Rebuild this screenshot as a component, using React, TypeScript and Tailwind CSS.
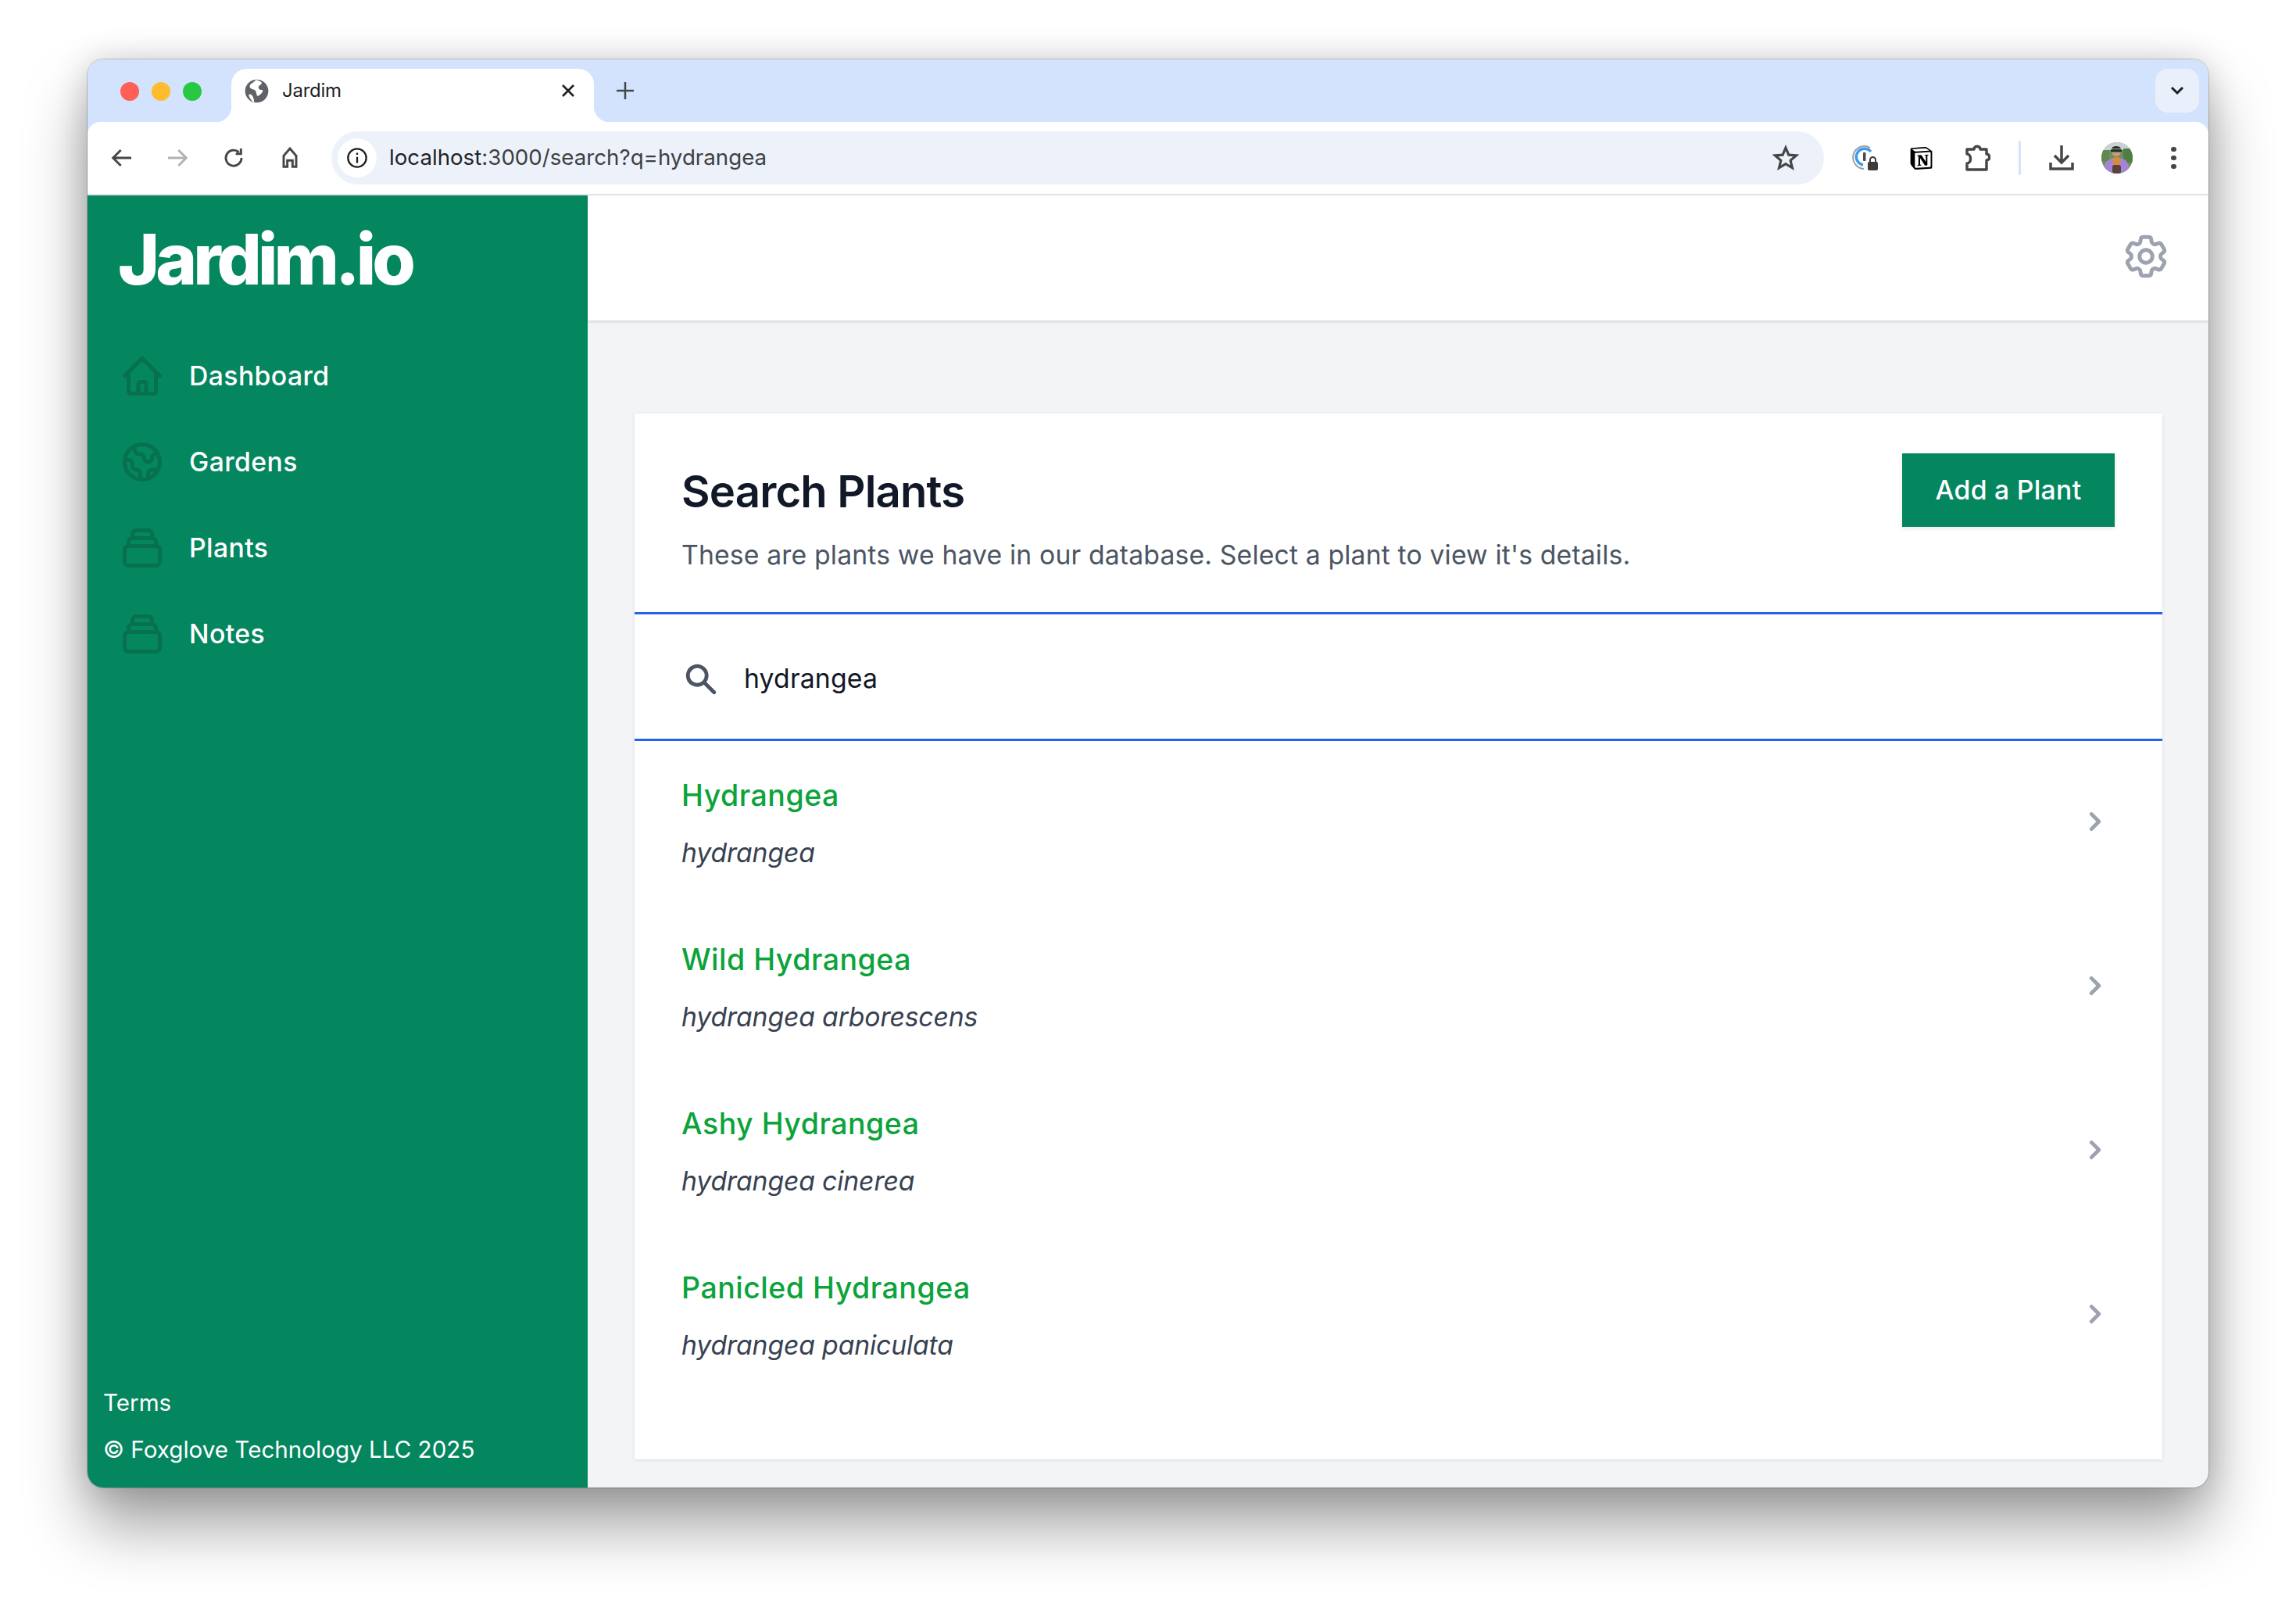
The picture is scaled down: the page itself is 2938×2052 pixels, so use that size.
import React from "react";
import { HiOutlineHome, HiOutlineGlobe, HiOutlineCollection, HiChevronRight, HiSearch } from "react-icons/hi";
import { HiOutlineCog6Tooth } from "react-icons/hi2";
import { SiNotion } from "react-icons/si";

const nav = [
  { label: "Dashboard", Icon: HiOutlineHome },
  { label: "Gardens", Icon: HiOutlineGlobe },
  { label: "Plants", Icon: HiOutlineCollection },
  { label: "Notes", Icon: HiOutlineCollection },
];

const plants = [
  ["Hydrangea", "hydrangea"],
  ["Wild Hydrangea", "hydrangea arborescens"],
  ["Ashy Hydrangea", "hydrangea cinerea"],
  ["Panicled Hydrangea", "hydrangea paniculata"],
];

function Favicon() {
  return (
    <svg width="31" height="31" viewBox="0 0 24 24">
      <circle cx="12" cy="12" r="11.500" fill="#5f6368" />
      <path d="M11 1 C9 4 6 4 5 7 C5 10 8 10 10 11 C12 12 11 15 13 17 C15 16 18 14 18 11 C15 11 13 10 14 7 C16 6 17 5 17 3.500 C15 2 13 1 11 1 Z" fill="#fff" />
      <path d="M5 15 C7 15 9 17 9.500 23 C7 22 5 19 4 16 Z" fill="#fff" />
    </svg>
  );
}

function ToolIcon({ children, w = 32 }: { children: React.ReactNode; w?: number }) {
  return (
    <svg width={w} height={w} viewBox="0 0 24 24" fill="none" stroke="currentColor" strokeWidth="2.200">
      {children}
    </svg>
  );
}

function OnePassword() {
  return (
    <svg width="34" height="34" viewBox="0 0 34 34" fill="none">
      <path d="M23 4 A14.500 14.500 0 1 0 15 31" stroke="#9aa0a6" strokeWidth="2" />
      <path d="M24 9 A10.500 10.500 0 1 0 14 26" stroke="#3b9cf0" strokeWidth="3.500" />
      <rect x="14" y="10" width="3.500" height="11" rx="1" fill="#4a4a4a" />
      <rect x="20" y="22" width="13" height="11" rx="2" fill="#3c3c3c" />
      <path d="M23 22 v-2.500 a3.500 3.500 0 0 1 7 0 v2.500" stroke="#3c3c3c" strokeWidth="2" />
    </svg>
  );
}

function Avatar() {
  return (
    <svg width="40" height="40" viewBox="0 0 40 40" className="rounded-full">
      <rect width="40" height="40" fill="#6f8f5a" />
      <rect width="40" height="10" fill="#c9d3d6" />
      <rect x="28" y="8" width="12" height="18" fill="#4f7d46" />
      <rect x="0" y="10" width="10" height="14" fill="#5d8850" />
      <path d="M2 40 C2 24 10 20 20 20 C30 20 36 24 36 40 Z" fill="#a583d6" />
      <circle cx="19" cy="12" r="6" fill="#c99a7c" />
      <rect x="12" y="9" width="14" height="3.500" rx="1" fill="#123a34" />
      <path d="M13 8 C14 4 24 4 25 8 Z" fill="#2a2a2a" />
      <rect x="15" y="19" width="9" height="11" rx="3" fill="#d98a3c" />
      <rect x="14" y="29" width="11" height="11" rx="3" fill="#5a4238" />
    </svg>
  );
}

export default function App() {
  return (
    <div className="w-[2938px] h-[2052px] bg-white pl-[112px] pt-[76px] overflow-hidden font-['Inter',sans-serif]">
      <div className="w-[2714px] h-[1827px] rounded-[20px] overflow-hidden flex flex-col bg-[#f3f4f6] shadow-[0_48px_80px_rgba(0,0,0,0.38),0_0_40px_rgba(0,0,0,0.16),0_0_0_1px_rgba(0,0,0,0.18)]">
        {/* Tab strip */}
        <div className="h-[80px] shrink-0 bg-[#d3e3fd] flex items-end pl-[42px] pr-[12px]">
          <div className="flex gap-[16px] self-start mt-[29px]">
            <span className="w-[24px] h-[24px] rounded-full bg-[#ff5f57]" />
            <span className="w-[24px] h-[24px] rounded-full bg-[#febc2e]" />
            <span className="w-[24px] h-[24px] rounded-full bg-[#28c840]" />
          </div>
          <div className="ml-[38px] w-[464px] h-[68px] bg-white rounded-t-[20px] flex items-center pl-[17px] pr-[24px] pb-[12px] relative">
            <Favicon />
            <span className="ml-[17px] text-[24px] text-[#1f1f1f] tracking-[-0.01em]">Jardim</span>
            <svg className="ml-auto" width="18" height="18" viewBox="0 0 18 18" stroke="#1f1f1f" strokeWidth="2.600">
              <path d="M2 2 L16 16 M16 2 L2 16" />
            </svg>
            <span className="absolute -left-[20px] bottom-0 w-[20px] h-[20px] bg-[radial-gradient(circle_at_0_0,#d3e3fd_20px,#ffffff_20.500px)]" />
            <span className="absolute -right-[20px] bottom-0 w-[20px] h-[20px] bg-[radial-gradient(circle_at_100%_0,#d3e3fd_20px,#ffffff_20.500px)]" />
          </div>
          <div className="ml-[29px] self-start mt-[29px] w-[22px] h-[22px]">
            <svg width="22" height="22" viewBox="0 0 22 22" stroke="#444746" strokeWidth="2.500">
              <path d="M11 0 V22 M0 11 H22" />
            </svg>
          </div>
          <div className="ml-auto self-start mt-[12px] w-[56px] h-[56px] rounded-[16px] bg-[#e9f0fc] flex items-center justify-center">
            <svg width="20" height="14" viewBox="0 0 20 14" fill="none" stroke="#1f1f1f" strokeWidth="3">
              <path d="M3 3 L10 10 L17 3" />
            </svg>
          </div>
        </div>

        {/* Toolbar */}
        <div className="h-[94px] shrink-0 bg-[#d3e3fd]">
          <div className="h-[94px] bg-white rounded-t-[16px] flex items-center pl-[25px] border-b-[2px] border-[#e3e3e3] box-border">
            <div className="w-[38px] flex justify-center text-[#444746]">
              <ToolIcon><path d="M21 12 H4 M11 4.500 L3.500 12 L11 19.500" /></ToolIcon>
            </div>
            <div className="ml-[33px] w-[38px] flex justify-center text-[#b0b3b6]">
              <ToolIcon><path d="M3 12 H20 M13 4.500 L20.500 12 L13 19.500" /></ToolIcon>
            </div>
            <div className="ml-[34px] w-[38px] flex justify-center text-[#444746]">
              <ToolIcon><path d="M19.500 12 A7.500 7.500 0 1 1 17 6.500 M19 3 V8 H14" /></ToolIcon>
            </div>
            <div className="ml-[34px] w-[38px] flex justify-center text-[#444746]">
              <ToolIcon><path d="M6 20.500 V10 L12 3 L18 10 V20.500 H14.500 V14.500 H9.500 V20.500 Z" /></ToolIcon>
            </div>
            <div className="ml-[34px] grow-0 shrink-0 h-[68px] rounded-full bg-[#edf2fa] flex items-center pl-[8px] pr-[32px] w-[1910px]">
              <span className="w-[50px] h-[50px] rounded-full bg-white flex items-center justify-center">
                <svg width="28" height="28" viewBox="0 0 24 24" fill="none" stroke="#1f1f1f" strokeWidth="2">
                  <circle cx="12" cy="12" r="10" />
                  <path d="M12 11 V17.500 M12 6.500 V8.500" />
                </svg>
              </span>
              <span className="ml-[16px] text-[27.700px] text-[#1f2328]">
                localhost<span className="text-[#3c4043]">:3000/search?q=hydrangea</span>
              </span>
              <svg className="ml-auto" width="34" height="34" viewBox="0 0 24 24" fill="none" stroke="#444746" strokeWidth="2.200" strokeLinejoin="miter">
                <path d="M12 2.800 L14.700 9.300 L21.500 9.800 L16.300 14.300 L18 21 L12 17.400 L6 21 L7.700 14.300 L2.500 9.800 L9.300 9.300 Z" />
              </svg>
            </div>
            <div className="ml-[36px] w-[34px] h-[34px]"><OnePassword /></div>
            <div className="ml-[40px] w-[29px] h-[29px]"><SiNotion size={29} color="#000" /></div>
            <div className="ml-[42px] w-[32px] h-[34px]">
              <svg width="32" height="34" viewBox="0 0 32 34" fill="none" stroke="#444746" strokeWidth="3.500">
                <path d="M2 6 H11 C11 1 19 1 19 6 H27 V12 C32 12 32 20 27 20 V32 H2 V24 C8 24 8 12 2 12 Z" strokeLinejoin="round" />
              </svg>
            </div>
            <div className="ml-[36px] w-[3px] h-[44px] rounded-full bg-[#d3e3fd]" />
            <div className="ml-[36px] w-[32px]">
              <svg width="32" height="32" viewBox="0 0 32 32" fill="none" stroke="#444746" strokeWidth="3.500">
                <path d="M16 0 V21 M7 13 L16 22 L25 13 M2 22 V30 H30 V22" />
              </svg>
            </div>
            <div className="ml-[35px] w-[40px] h-[40px]"><Avatar /></div>
            <div className="ml-[49px] w-[7px] flex flex-col gap-[4.500px]">
              <span className="w-[6.500px] h-[6.500px] rounded-full bg-[#444746]" />
              <span className="w-[6.500px] h-[6.500px] rounded-full bg-[#444746]" />
              <span className="w-[6.500px] h-[6.500px] rounded-full bg-[#444746]" />
            </div>
          </div>
        </div>

        {/* Page */}
        <div className="flex grow min-h-0">
          <aside className="w-[640px] shrink-0 bg-[#04865f] flex flex-col text-white">
            <div className="h-[90px] mt-[37px] pl-[39px] text-[90px] leading-[90px] font-extrabold tracking-[-0.055em]">Jardim.io</div>
            <nav className="mt-[49px] pl-[40px] flex flex-col">
              {nav.map(({ label, Icon }) => (
                <div key={label} className="h-[110px] flex items-center">
                  <Icon size={60} className="text-[#06704f]" />
                  <span className="ml-[30px] text-[33.750px] font-medium tracking-[0.4px]">{label}</span>
                </div>
              ))}
            </nav>
            <div className="mt-auto pl-[20px] pb-[26px] flex flex-col text-[29.600px] leading-[45px] gap-[15px]">
              <span>Terms</span>
              <span>© Foxglove Technology LLC 2025</span>
            </div>
          </aside>
          <div className="flex flex-col grow min-w-0">
            <header className="h-[160px] shrink-0 bg-white flex items-center justify-end pr-[47px] pb-[4px] shadow-[0_2px_3px_rgba(0,0,0,0.12)]">
              <HiOutlineCog6Tooth size={66} strokeWidth={1.8} className="text-[#9ca3af]" />
            </header>
            <main className="grow min-h-0 px-[60px] pt-[119px]">
              <section className="w-[1955px] h-[1338px] bg-white shadow-[0_1px_4px_rgba(0,0,0,0.1)] flex flex-col">
                <div className="h-[254px] shrink-0 flex justify-between px-[60px] border-b-[3px] border-[#2563eb] box-content">
                  <div className="pt-[63px]">
                    <h1 className="text-[56.250px] leading-[75px] font-semibold text-[#111827] tracking-[-0.015em]">Search Plants</h1>
                    <p className="mt-[18px] text-[33.750px] leading-[50px] text-[#4b5563] tracking-[0.14px]">These are plants we have in our database. Select a plant to view it's details.</p>
                  </div>
                  <button className="mt-[51px] mr-[1px] w-[272px] h-[94px] bg-[#04865f] text-white text-[33.750px] font-medium tracking-[0.3px] shadow-[0_2px_6px_rgba(0,0,0,0.1)]">Add a Plant</button>
                </div>
                <div className="h-[153px] shrink-0 flex items-center pl-[60px] pt-[6px] border-b-[3px] border-[#2563eb] box-content">
                  <HiSearch size={48} className="text-[#4b5563] ml-[1px]" />
                  <span className="ml-[31px] text-[33.750px] text-[#111827] tracking-[0.15px]">hydrangea</span>
                </div>
                <div className="flex flex-col gap-[4px]">
                  {plants.map(([name, latin]) => (
                    <div key={name} className="h-[206px] flex items-center justify-between pl-[60px] pr-[62px]">
                      <div className="flex flex-col gap-[23px] pt-[5px]">
                        <span className="text-[37.500px] leading-[52px] font-medium text-[#0ca33b] tracking-[0.5px]">{name}</span>
                        <span className="text-[33.750px] leading-[48px] italic text-[#374151] tracking-[-0.15px]">{latin}</span>
                      </div>
                      <HiChevronRight size={48} className="text-[#9ca3af]" />
                    </div>
                  ))}
                </div>
              </section>
            </main>
          </div>
        </div>
      </div>
    </div>
  );
}
